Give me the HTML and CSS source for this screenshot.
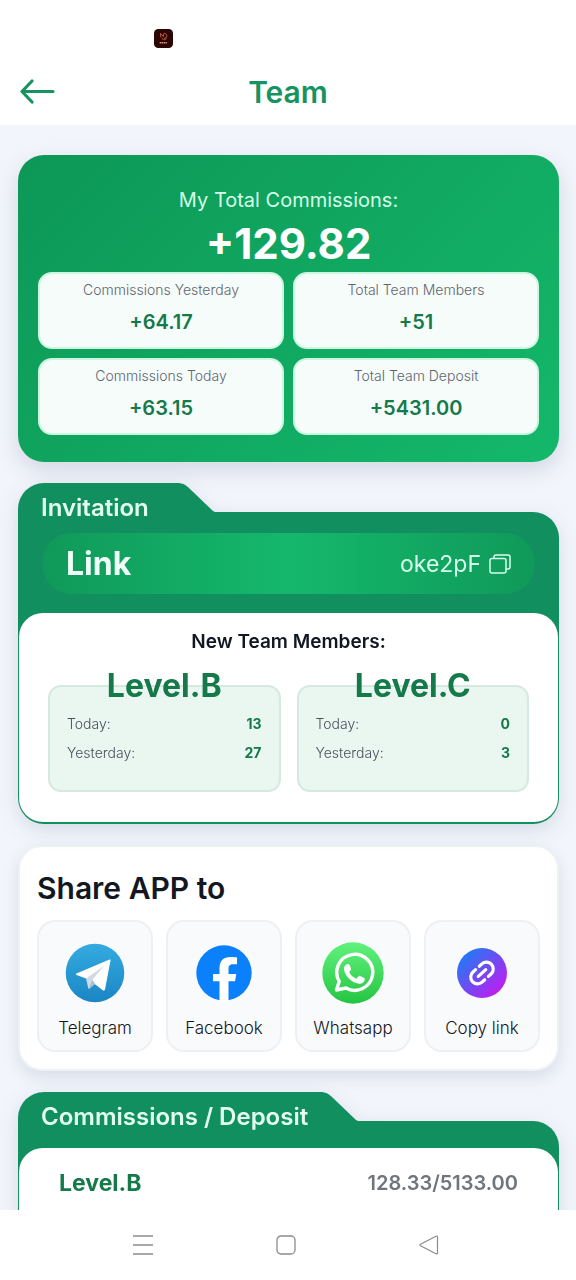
FILE: index.html
```html
<!DOCTYPE html>
<html lang="en">
<head>
<meta charset="utf-8">
<meta name="viewport" content="width=device-width, initial-scale=1">
<title>Team</title>
<link rel="stylesheet" href="styles.css">
</head>
<body>
<div class="status-bar">
  <svg class="app-badge" viewBox="0 0 20 20" aria-hidden="true">
    <rect width="20" height="20" rx="4.500" fill="#2c0505"/>
    <path d="M7 4.500v4M7 5l3 3V5M10.500 4.500c4 0 4 5 0 5.500M8 9c1 3 5 3 5 0" fill="none" stroke="#c4603f" stroke-width="1"/>
    <path d="M6 14.500h8" stroke="#d99a78" stroke-width="1.400" stroke-dasharray="1.500 .5"/>
  </svg>
</div>
<header class="top-bar">
  <button class="back" type="button" aria-label="Back">
    <svg viewBox="0 0 36 26" width="36" height="26" fill="none" stroke="#17935f" stroke-width="3.200" stroke-linecap="round" stroke-linejoin="round"><path d="M12 2 2 12.500l10 10.500M2 12.500h31"/></svg>
  </button>
  <h1 class="page-title">Team</h1>
</header>

<main class="content">
  <section class="summary">
    <p class="summary-label">My Total Commissions:</p>
    <p class="summary-total">+129.82</p>
    <dl class="stats">
      <div class="stat"><dt>Commissions Yesterday</dt><dd>+64.17</dd></div>
      <div class="stat"><dt>Total Team Members</dt><dd>+51</dd></div>
      <div class="stat"><dt>Commissions Today</dt><dd>+63.15</dd></div>
      <div class="stat"><dt>Total Team Deposit</dt><dd>+5431.00</dd></div>
    </dl>
  </section>

  <section class="folder">
    <div class="folder-tab">
      <h2 class="folder-title">Invitation</h2>
      <svg class="folder-slope" viewBox="0 0 38 29" width="38" height="29" aria-hidden="true"><path d="M0 0c6 0 9 2 13 6l23 22 2 1H0z" fill="#128f5e"/></svg>
    </div>
    <div class="folder-body">
      <div class="invite">
        <span class="invite-name">Link</span>
        <button class="invite-code" type="button">oke2pF
          <svg viewBox="0 0 22 20" width="22" height="20" fill="none" stroke="#d5ffea" stroke-width="1.500" aria-hidden="true"><rect x="1" y="4.500" width="16" height="14.500" rx="2"/><path d="M5 4.500V3a2 2 0 0 1 2-2h12a2 2 0 0 1 2 2v10a2 2 0 0 1-2 2h-2"/></svg>
        </button>
      </div>
      <div class="panel">
        <h3 class="panel-title">New Team Members:</h3>
        <div class="levels">
          <section class="level">
            <h4>Level.B</h4>
            <dl><div><dt>Today:</dt><dd>13</dd></div><div><dt>Yesterday:</dt><dd>27</dd></div></dl>
          </section>
          <section class="level">
            <h4>Level.C</h4>
            <dl><div><dt>Today:</dt><dd>0</dd></div><div><dt>Yesterday:</dt><dd>3</dd></div></dl>
          </section>
        </div>
      </div>
    </div>
  </section>

  <section class="share">
    <h2 class="share-title">Share APP to</h2>
    <div class="share-list">
      <button class="share-item" type="button">
        <svg viewBox="0 0 62 62" aria-hidden="true">
          <defs><linearGradient id="tg" x2="0" y2="1"><stop stop-color="#34abe0"/><stop offset="1" stop-color="#1a86c4"/></linearGradient></defs>
          <circle cx="31" cy="31" r="29.300" fill="url(#tg)"/>
          <path d="M12.500 31.500 45.500 17.600c.8-.3 1.200 0 1 .9L41 47.500c-.3 1.200-1.200 1.400-2.200.7L30 41.500 22 36.500l-9.500-3.600c-.8-.4-.8-1 0-1.400z" fill="#fff"/>
          <path d="M22 36.500 40 24 28.500 37.500 25.300 47c-.8 0-1-.8-1.200-1.500z" fill="#d0d9e4"/>
          <path d="M28.500 37.500 25.300 47l5.700-5z" fill="#b2bfcf"/>
        </svg>
        Telegram
      </button>
      <button class="share-item" type="button">
        <svg viewBox="0 0 62 62" aria-hidden="true">
          <circle cx="31" cy="31" r="27.700" fill="#0b80fb"/>
          <path d="M26.500 59V39.300H20V32h6.500v-5.500c0-8 4-11.500 11-11.500 2.500 0 5 .2 6.500.6v6.600h-4c-3.400 0-4.500 1.500-4.500 4.500V32h7.800l-1.300 7.300h-6.500V59z" fill="#fff"/>
        </svg>
        Facebook
      </button>
      <button class="share-item" type="button">
        <svg viewBox="0 0 62 62" aria-hidden="true">
          <defs><linearGradient id="wa" x2="0" y2="1"><stop stop-color="#61f27c"/><stop offset="1" stop-color="#25c443"/></linearGradient></defs>
          <circle cx="31" cy="31" r="30.700" fill="url(#wa)"/>
          <path d="m14.500 48 2.700-8.700a18 18 0 1 1 6.800 6.700z" fill="none" stroke="#fff" stroke-width="3.400" stroke-linejoin="round"/>
          <path d="M26 22c.8 0 1.200.4 1.500 1.100l1.500 3.500c.3.800 0 1.500-.5 2l-1.300 1.600c1.800 3.200 4 5 7.200 6.500l2-2.300c.5-.6 1-.7 1.700-.4l3.700 1.800c.9.400 1.100.9.900 1.900-.6 3-3.200 4.300-5.700 4C29.500 41 22 32.500 22 27c0-2.600 1.600-5 4-5z" fill="#fff"/>
        </svg>
        Whatsapp
      </button>
      <button class="share-item" type="button">
        <svg viewBox="0 0 62 62" aria-hidden="true">
          <defs><linearGradient id="cl" x1=".1" y1=".1" x2=".9" y2=".9"><stop stop-color="#1b7df5"/><stop offset="1" stop-color="#c41af0"/></linearGradient></defs>
          <circle cx="31" cy="31" r="25" fill="url(#cl)"/>
          <g fill="none" stroke="#fff" stroke-width="3.200" stroke-linecap="round" transform="rotate(-42 31 31)"><path d="M26 31h10M28.500 24.200h-3.500a6.800 6.800 0 0 0 0 13.600h3.500M33.500 24.200h3.500a6.800 6.800 0 0 1 0 13.600h-3.500"/></g>
        </svg>
        Copy link
      </button>
    </div>
  </section>

  <section class="folder">
    <div class="folder-tab">
      <h2 class="folder-title">Commissions / Deposit</h2>
      <svg class="folder-slope" viewBox="0 0 38 29" width="38" height="29" aria-hidden="true"><path d="M0 0c6 0 9 2 13 6l23 22 2 1H0z" fill="#128f5e"/></svg>
    </div>
    <div class="folder-body folder-body-plain">
      <div class="panel">
        <div class="deposit-row"><span class="deposit-level">Level.B</span><span class="deposit-value">128.33/5133.00</span></div>
      </div>
    </div>
  </section>
</main>

<nav class="system-nav" aria-label="System">
  <button type="button" aria-label="Recent apps"><svg viewBox="0 0 20 20" width="20" height="20" fill="none" stroke="#8c8c8c" stroke-width="1.400"><path d="M0 1h20M0 10h20M0 19h20"/></svg></button>
  <button type="button" aria-label="Home"><svg viewBox="0 0 20 20" width="20" height="20" fill="none" stroke="#8c8c8c" stroke-width="1.300"><rect x="1" y="1" width="18" height="18" rx="4"/></svg></button>
  <button type="button" aria-label="Back"><svg viewBox="0 0 20 20" width="20" height="20" fill="none" stroke="#8c8c8c" stroke-width="1.200" stroke-linejoin="round"><path d="M1.500 9.200 17 1.200q1.500-.5 1.500 1v15.600q0 1.500-1.500 1L1.500 10.800q-1-.8 0-1.600z"/></svg></button>
</nav>
</body>
</html>
```
FILE: styles.css
```css
* { box-sizing: border-box; }

body {
  margin: 0;
  height: 100vh;
  display: flex;
  flex-direction: column;
  background: #fff;
  color: #131722;
  font-family: Inter, "Liberation Sans", sans-serif;
}

h1, h2, h3, h4, p, dl, dd { margin: 0; }
button { border: 0; padding: 0; background: none; font: inherit; color: inherit; }
svg { display: block; }

.status-bar { flex: none; height: 58px; padding: 29px 0 0 154px; }
.app-badge { width: 19px; height: 19px; }

.top-bar {
  flex: none;
  height: 67px;
  padding: 0 20px;
  display: grid;
  grid-template-columns: 36px 1fr 36px;
  align-items: center;
}
.page-title { text-align: center; font-size: 30px; line-height: 40px; font-weight: 600; color: #17935f; }

.content {
  flex: 1;
  min-height: 0;
  overflow: hidden auto;
  scrollbar-width: none;
  padding: 30px 17px 0 18px;
  display: flex;
  flex-direction: column;
  gap: 21px;
  background: #f2f5fb;
}
.content > * { flex: none; }

.summary {
  padding: 30px 20px 27px;
  border-radius: 26px;
  background: linear-gradient(135deg, #0d9757, #14b86a);
  box-shadow: 0 8px 22px rgba(40, 50, 100, .15);
  text-align: center;
}
.summary-label { font-size: 20px; line-height: 30px; color: #d5ffea; }
.summary-total { font-size: 42px; line-height: 57px; font-weight: 700; color: #fff; }
.stats { display: grid; grid-template-columns: 1fr 1fr; gap: 9px; }
.stat {
  height: 77px;
  padding-top: 6px;
  border: 2px solid #c9f7df;
  border-radius: 14px;
  background: #f6fcfa;
}
.stat dt { font-size: 14px; line-height: 20px; font-weight: 300; color: #5f656e; }
.stat dd { margin-top: 8px; font-size: 20px; line-height: 28px; font-weight: 600; color: #15794a; }

.folder { filter: drop-shadow(0 6px 10px rgba(40, 50, 100, .13)); }
.folder-tab { position: relative; z-index: 1; display: flex; align-items: flex-start; margin-bottom: -21px; }
.folder-title {
  min-width: 159px;
  padding: 0 12px 0 23px;
  height: 50px;
  border-radius: 26px 0 0 0;
  background: #128f5e;
  color: #e2fff1;
  font-size: 24px;
  line-height: 50px;
  font-weight: 600;
}
.folder-body { padding: 21px 1px 2px; border-radius: 0 26px 26px 26px; background: #128f5e; }
.folder-body-plain { padding-top: 27px; }
.invite {
  margin: 0 23px 19px;
  padding: 0 24px;
  height: 61px;
  display: flex;
  align-items: center;
  justify-content: space-between;
  border-radius: 31px;
  background: linear-gradient(90deg, #10995a, #14b86c 50%, #10995a);
}
.invite-name { font-size: 32px; font-weight: 700; color: #f0fff8; }
.invite-code { display: flex; align-items: center; gap: 8px; font-size: 23px; color: #d5ffea; }

.panel { padding: 14px 29px 30px; border-radius: 24px; background: #fff; }
.panel-title { text-align: center; font-size: 19px; line-height: 30px; font-weight: 600; }
.levels { margin-top: 28px; display: grid; grid-template-columns: 1fr 1fr; gap: 16px; }
.level { height: 107px; padding: 0 17px; border: 2px solid #d5e9e0; border-radius: 13px; background: #eaf6f0; }
.level h4 { margin-top: -21px; text-align: center; font-size: 32px; line-height: 40px; font-weight: 700; color: #15794a; }
.level dl { margin-top: 3px; }
.level dl div { display: flex; justify-content: space-between; font-size: 14px; line-height: 29px; color: #4a515e; }
.level dt { font-weight: 300; }
.level dd { font-weight: 700; color: #15794a; }

.share {
  padding: 21px 17px 17px;
  border: 2px solid #edf2f4;
  border-radius: 24px;
  background: #fff;
  box-shadow: 0 6px 16px rgba(40, 50, 100, .12);
}
.share-title { font-size: 30px; line-height: 40px; font-weight: 600; }
.share-list { margin-top: 12px; display: grid; grid-template-columns: repeat(4, 1fr); gap: 13px; }
.share-item {
  height: 132px;
  display: flex;
  flex-direction: column;
  align-items: center;
  padding-top: 20px;
  border: 2px solid #eff0f3;
  border-radius: 18px;
  background: #f9fafc;
  font-size: 17px;
  line-height: 24px;
  font-weight: 300;
}
.share-item svg { width: 62px; height: 62px; margin-bottom: 12px; }

.deposit-row { display: flex; align-items: center; justify-content: space-between; padding: 0 11px; height: 42px; }
.deposit-level { font-size: 23px; font-weight: 700; color: #15794a; }
.deposit-value { font-size: 20px; font-weight: 600; color: #70747d; }

.system-nav { flex: none; height: 70px; padding: 0 76px 0 71px; display: flex; align-items: center; justify-content: space-around; background: #fff; }
```
